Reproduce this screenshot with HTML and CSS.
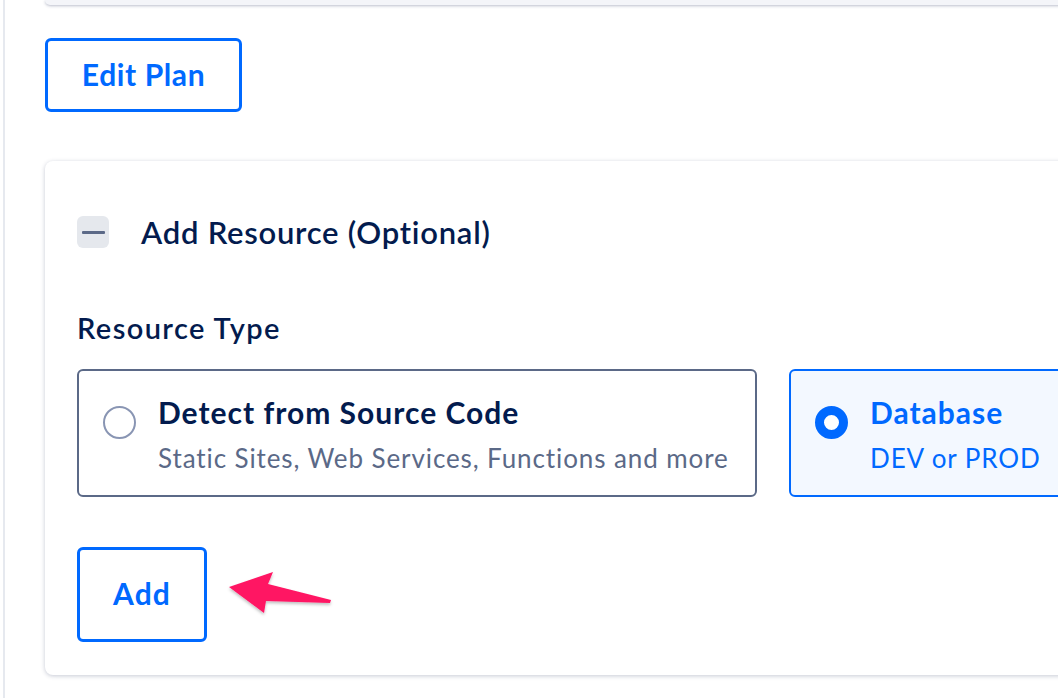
FILE: index.html
```html
<!DOCTYPE html>
<html>
<head>
<meta charset="utf-8">
<link rel="stylesheet" href="styles.css">
</head>
<body>
<div class="page">
  <main class="main">
    <div class="prev-card"></div>
    <button class="btn btn-edit">Edit Plan</button>
    <section class="card">
      <div class="card-head">
        <span class="toggle"><span class="toggle-bar"></span></span>
        <h2 class="card-title">Add Resource (Optional)</h2>
      </div>
      <h3 class="field-label">Resource Type</h3>
      <div class="options">
        <label class="option">
          <span class="radio"></span>
          <span class="option-text">
            <span class="option-title">Detect from Source Code</span>
            <span class="option-sub">Static Sites, Web Services, Functions and more</span>
          </span>
        </label>
        <label class="option option-selected">
          <span class="radio radio-on"></span>
          <span class="option-text">
            <span class="option-title">Database</span>
            <span class="option-sub">DEV or PROD</span>
          </span>
        </label>
      </div>
      <div class="actions">
        <button class="btn btn-add">Add</button>
        <svg class="arrow" width="120" height="60" viewBox="0 0 120 60">
          <defs>
            <filter id="sh" x="-20%" y="-20%" width="140%" height="160%">
              <feDropShadow dx="0" dy="2" stdDeviation="1.5" flood-color="#000" flood-opacity="0.25"/>
            </filter>
          </defs>
          <polygon filter="url(#sh)" fill="#ff1464" points="8,27 52,12 47,24 110,40 109,43 45,41 43,53"/>
        </svg>
      </div>
    </section>
  </main>
</div>
</body>
</html>
```
FILE: styles.css
```css
* { box-sizing: border-box; }
html, body { margin: 0; padding: 0; background: #fff; overflow: hidden; }
body {
  width: 1058px;
  height: 698px;
  font-family: Lato, "Liberation Sans", sans-serif;
  color: #031b4e;
}
.page {
  height: 698px;
  margin-left: 3px;
  border-left: 2px solid #e6e9ef;
  overflow: hidden;
}
.main {
  padding-left: 40px;
  width: 1500px;
}
.prev-card {
  height: 5px;
  background: #f4f5f9;
  border-radius: 0 0 6px 6px;
  box-shadow: 0 1px 3px rgba(60, 70, 110, 0.35);
}
.btn {
  display: flex;
  align-items: center;
  justify-content: center;
  background: #fff;
  border: 3px solid #0069ff;
  border-radius: 6px;
  color: #0069ff;
  font-family: inherit;
  font-weight: 700;
  padding: 0 0 3px;
  cursor: pointer;
}
.btn-edit {
  margin-top: 33px;
  width: 197px;
  height: 74px;
  font-size: 30px;
  letter-spacing: 0.6px;
}
.card {
  margin-top: 49px;
  background: #fff;
  border-radius: 8px;
  box-shadow: 0 1px 4px rgba(50, 60, 100, 0.28);
  padding: 55px 32px 33px;
}
.card-head {
  display: flex;
  align-items: center;
  gap: 32px;
  height: 32px;
}
.toggle {
  flex: none;
  width: 32px;
  height: 32px;
  border-radius: 6px;
  background: #e5e8ed;
  display: flex;
  align-items: center;
  justify-content: center;
}
.toggle-bar {
  width: 23px;
  height: 3px;
  background: #5b6987;
  border-radius: 1px;
}
.card-title {
  margin: 0;
  font-size: 31px;
  font-weight: 600;
  line-height: 32px;
  letter-spacing: 0.75px;
}
.field-label {
  margin: 64px 0 0;
  font-size: 29px;
  font-weight: 600;
  line-height: 32px;
  letter-spacing: 1.4px;
}
.options {
  margin-top: 25px;
  display: flex;
  gap: 32px;
}
.option {
  flex: none;
  width: 680px;
  height: 128px;
  border: 2px solid #5b6987;
  border-radius: 6px;
  display: flex;
  align-items: flex-start;
  padding: 23px 24px 0 24px;
  gap: 22px;
}
.option-selected {
  border-color: #0069ff;
  background: #f3f8ff;
}
.radio {
  margin-top: 12px;
  flex: none;
  width: 33px;
  height: 33px;
  border-radius: 50%;
  border: 2px solid #8995b3;
}
.radio-on {
  border: 9px solid #0069ff;
  background: #fff;
}
.option-text {
  display: flex;
  flex-direction: column;
}
.option-title {
  font-size: 30px;
  font-weight: 700;
  line-height: 36px;
  letter-spacing: 1px;
}
.option-sub {
  margin-top: 13px;
  font-size: 26px;
  line-height: 30px;
  letter-spacing: 0.9px;
  color: #5b6987;
  white-space: nowrap;
}
.option-selected .option-title,
.option-selected .option-sub {
  color: #0069ff;
}
.actions {
  margin-top: 50px;
  display: flex;
  align-items: flex-start;
}
.btn-add {
  width: 130px;
  height: 95px;
  font-size: 30px;
  letter-spacing: 1.2px;
}
.arrow {
  margin-top: 13px;
  margin-left: 14px;
}
```
